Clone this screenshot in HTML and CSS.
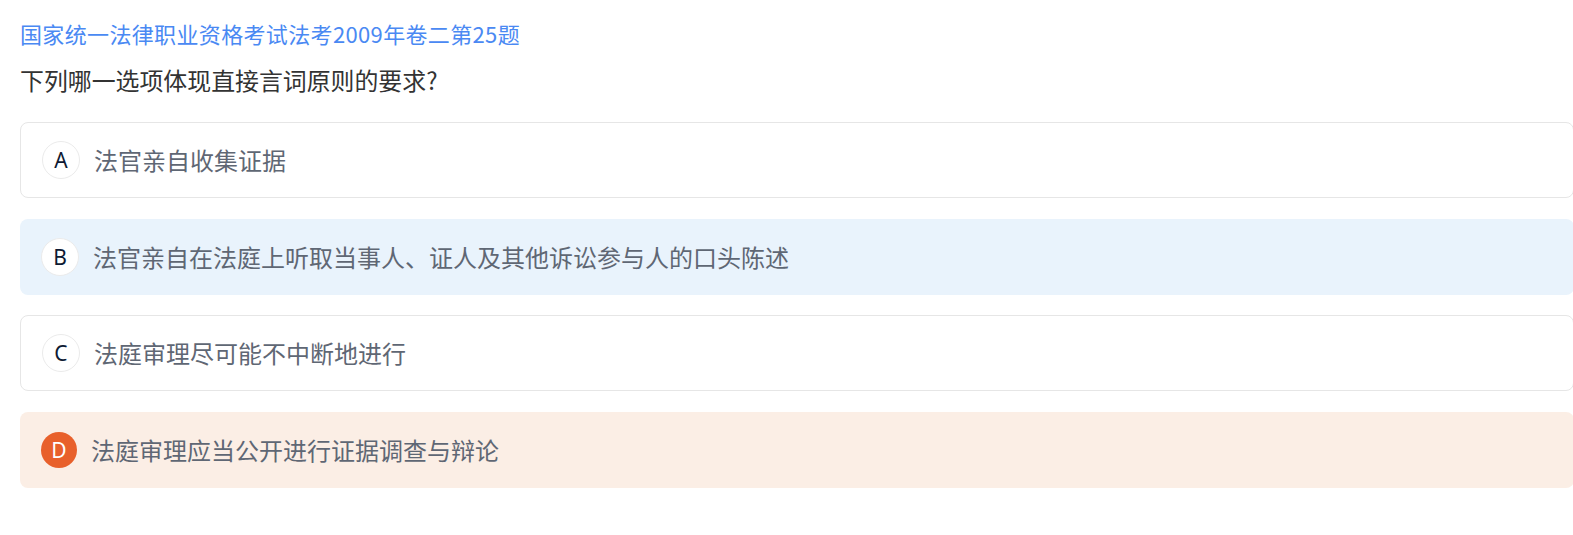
FILE: index.html
```html
<!DOCTYPE html>
<html lang="zh-CN">
<head>
<meta charset="utf-8">
<title>题目</title>
<link rel="stylesheet" href="styles.css">
</head>
<body>
<div class="page">
  <div class="source">国家统一法律职业资格考试法考2009年卷二第25题</div>
  <div class="question">下列哪一选项体现直接言词原则的要求?</div>
  <div class="options">
    <div class="option">
      <span class="badge">A</span>
      <span class="text">法官亲自收集证据</span>
    </div>
    <div class="option option-blue">
      <span class="badge">B</span>
      <span class="text">法官亲自在法庭上听取当事人、证人及其他诉讼参与人的口头陈述</span>
    </div>
    <div class="option">
      <span class="badge">C</span>
      <span class="text">法庭审理尽可能不中断地进行</span>
    </div>
    <div class="option option-orange">
      <span class="badge badge-orange">D</span>
      <span class="text">法庭审理应当公开进行证据调查与辩论</span>
    </div>
  </div>
</div>
</body>
</html>
```

FILE: styles.css
```css
html, body {
  margin: 0;
  padding: 0;
  background: #ffffff;
  overflow: hidden;
}

body {
  font-family: "Noto Sans CJK SC", "Noto Sans", "Liberation Sans", sans-serif;
}

.page {
  padding: 18px 0 0 20px;
}

.source {
  font-size: 22px;
  line-height: 30px;
  letter-spacing: 0.35px;
  color: #4a89f3;
}

.question {
  margin-top: 16px;
  font-size: 23.9px;
  line-height: 32px;
  color: #333333;
}

.options {
  margin-top: 26px;
  margin-right: -1px;
  display: flex;
  flex-direction: column;
  gap: 20.7px;
}

.option {
  box-sizing: border-box;
  height: 76px;
  display: flex;
  align-items: center;
  padding-left: 21px;
  border: 1px solid #e6e6e6;
  border-radius: 8px;
  background: #ffffff;
}

.option-blue {
  border: none;
  background: #e9f3fc;
}

.option-orange {
  border: none;
  background: #fbeee5;
}

.badge {
  box-sizing: border-box;
  width: 38px;
  height: 38px;
  flex: none;
  border-radius: 50%;
  border: 1px solid #ebebeb;
  background: #ffffff;
  display: flex;
  align-items: center;
  justify-content: center;
  font-family: "Noto Sans", "Liberation Sans", sans-serif;
  font-size: 21px;
  color: #0e1a33;
  margin-right: 14px;
}

.badge-orange {
  width: 36px;
  height: 36px;
  border: none;
  background: #e8602b;
  color: #ffffff;
}

.text {
  font-size: 24px;
  line-height: 32px;
  color: #5f6774;
}
```
